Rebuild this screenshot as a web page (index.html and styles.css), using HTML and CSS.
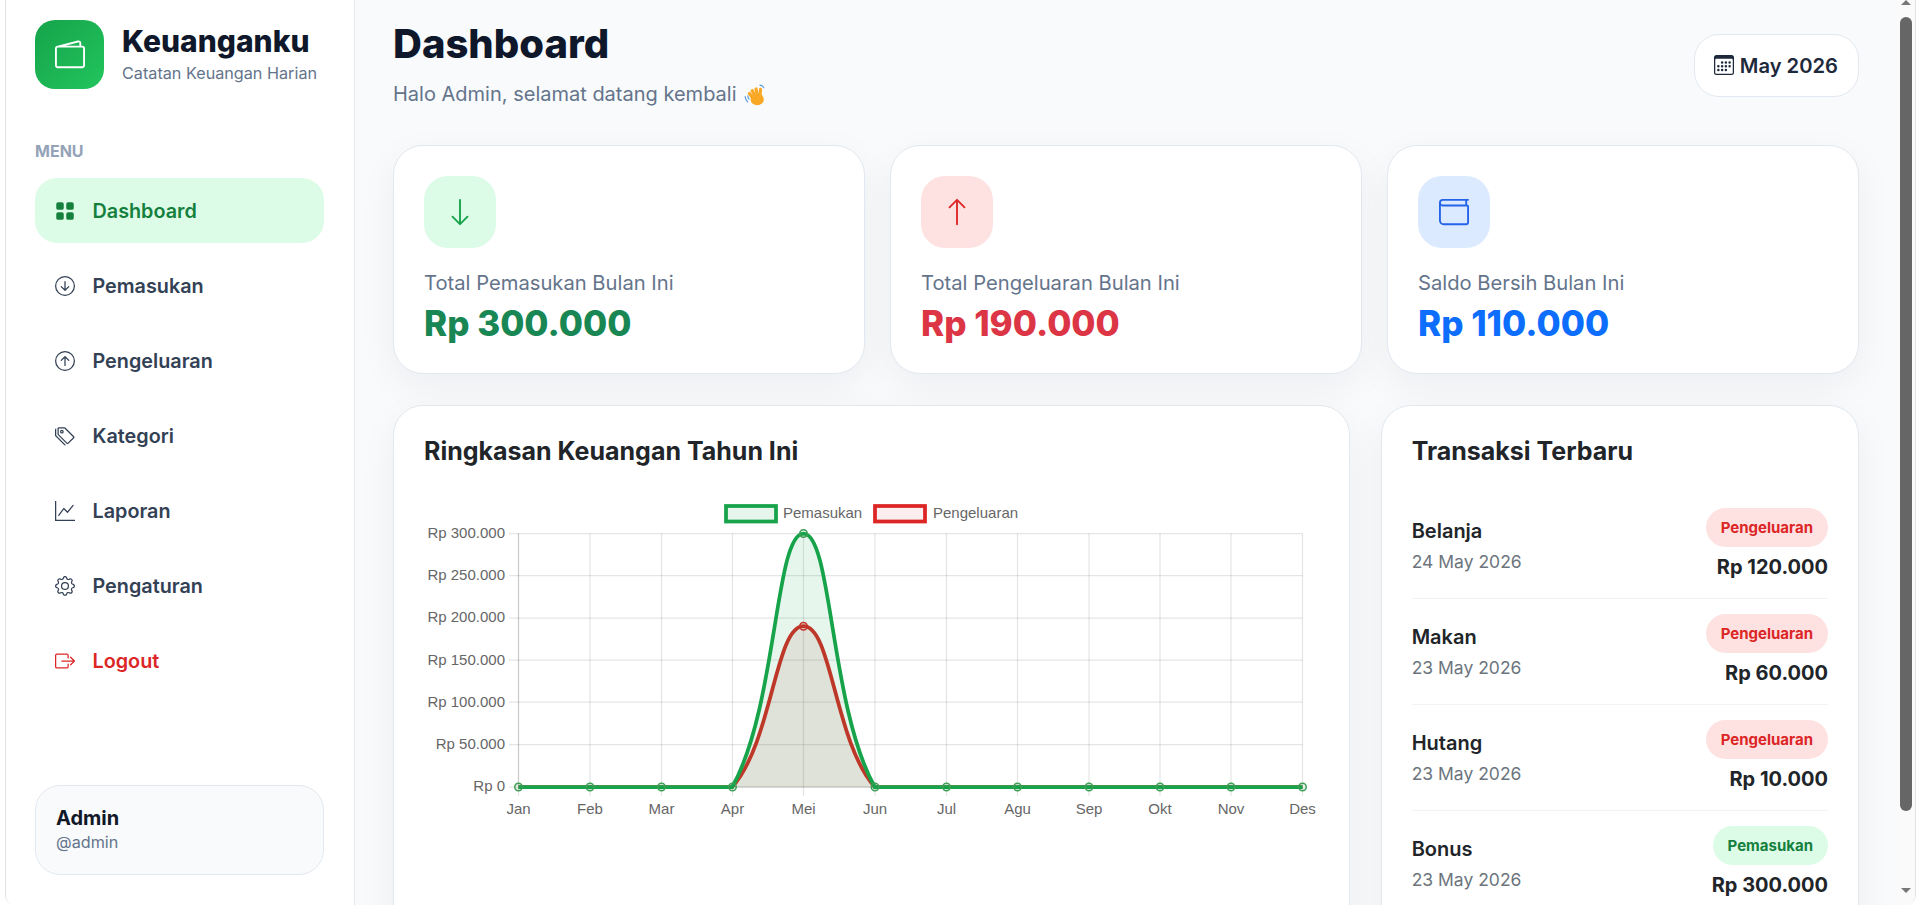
FILE: index.html
```html
<!doctype html>
<html lang="id">

<head>
	<meta charset="UTF-8" />
	<meta name="viewport" content="width=device-width, initial-scale=1.0" />
	<title>Keuanganku - Dashboard</title>
	<link rel="stylesheet" href="styles.css">
</head>

<body>
	<div class="window">
		<aside class="sidebar">
			<div class="brand">
				<div class="brand-logo">
					<svg viewBox="0 0 16 16" width="30" height="30" fill="currentColor"><path d="M12.136.326A1.5 1.5 0 0 1 14 1.78V3h.5A1.5 1.5 0 0 1 16 4.5v9a1.5 1.5 0 0 1-1.5 1.5h-13A1.5 1.5 0 0 1 0 13.5v-9a1.5 1.5 0 0 1 1.432-1.499zM5.562 3H13V1.78a.5.5 0 0 0-.621-.484zM1.5 4a.5.5 0 0 0-.5.5v9a.5.5 0 0 0 .5.5h13a.5.5 0 0 0 .5-.5v-9a.5.5 0 0 0-.5-.5z"/></svg>
				</div>
				<div class="brand-text">
					<div class="brand-name">Keuanganku</div>
					<div class="brand-sub">Catatan Keuangan Harian</div>
				</div>
			</div>

			<div class="menu-label">MENU</div>
			<nav class="menu">
				<a class="menu-item active">
					<svg viewBox="0 0 16 16" width="20" height="20" fill="currentColor"><path d="M1 2.5A1.5 1.5 0 0 1 2.5 1h3A1.5 1.5 0 0 1 7 2.5v3A1.5 1.5 0 0 1 5.5 7h-3A1.5 1.5 0 0 1 1 5.5zm8 0A1.5 1.5 0 0 1 10.5 1h3A1.5 1.5 0 0 1 15 2.5v3A1.5 1.5 0 0 1 13.5 7h-3A1.5 1.5 0 0 1 9 5.5zm-8 8A1.5 1.5 0 0 1 2.5 9h3A1.5 1.5 0 0 1 7 10.5v3A1.5 1.5 0 0 1 5.5 15h-3A1.5 1.5 0 0 1 1 13.5zm8 0A1.5 1.5 0 0 1 10.5 9h3a1.5 1.5 0 0 1 1.5 1.5v3a1.5 1.5 0 0 1-1.5 1.5h-3A1.5 1.5 0 0 1 9 13.5z"/></svg>
					Dashboard
				</a>
				<a class="menu-item">
					<svg viewBox="0 0 16 16" width="20" height="20" fill="currentColor"><path fill-rule="evenodd" d="M1 8a7 7 0 1 0 14 0A7 7 0 0 0 1 8m15 0A8 8 0 1 1 0 8a8 8 0 0 1 16 0M8.5 4.5a.5.5 0 0 0-1 0v5.793L5.354 8.146a.5.5 0 1 0-.708.708l3 3a.5.5 0 0 0 .708 0l3-3a.5.5 0 0 0-.708-.708L8.5 10.293z"/></svg>
					Pemasukan
				</a>
				<a class="menu-item">
					<svg viewBox="0 0 16 16" width="20" height="20" fill="currentColor"><path fill-rule="evenodd" d="M1 8a7 7 0 1 0 14 0A7 7 0 0 0 1 8m15 0A8 8 0 1 1 0 8a8 8 0 0 1 16 0m-7.5 3.5a.5.5 0 0 1-1 0V5.707L5.354 7.854a.5.5 0 1 1-.708-.708l3-3a.5.5 0 0 1 .708 0l3 3a.5.5 0 0 1-.708.708L8.5 5.707z"/></svg>
					Pengeluaran
				</a>
				<a class="menu-item">
					<svg viewBox="0 0 16 16" width="20" height="20" fill="currentColor"><path d="M3 2v4.586l7 7L14.586 9l-7-7zM2 2a1 1 0 0 1 1-1h4.586a1 1 0 0 1 .707.293l7 7a1 1 0 0 1 0 1.414l-4.586 4.586a1 1 0 0 1-1.414 0l-7-7A1 1 0 0 1 2 6.586z"/><path d="M5.5 5a.5.5 0 1 1 0-1 .5.5 0 0 1 0 1m0 1a1.5 1.5 0 1 0 0-3 1.5 1.5 0 0 0 0 3M1 7.086a1 1 0 0 0 .293.707L8.75 15.25l-.043.043a1 1 0 0 1-1.414 0l-7-7A1 1 0 0 1 0 7.586V3a1 1 0 0 1 1-1z"/></svg>
					Kategori
				</a>
				<a class="menu-item">
					<svg viewBox="0 0 16 16" width="20" height="20" fill="currentColor"><path fill-rule="evenodd" d="M0 0h1v15h15v1H0zm14.817 3.113a.5.5 0 0 1 .07.704l-4.5 5.5a.5.5 0 0 1-.74.037L7.06 6.767l-3.656 5.027a.5.5 0 0 1-.808-.588l4-5.5a.5.5 0 0 1 .758-.06l2.609 2.61 4.15-5.073a.5.5 0 0 1 .704-.07"/></svg>
					Laporan
				</a>
				<a class="menu-item">
					<svg viewBox="0 0 16 16" width="20" height="20" fill="currentColor"><path d="M8 4.754a3.246 3.246 0 1 0 0 6.492 3.246 3.246 0 0 0 0-6.492M5.754 8a2.246 2.246 0 1 1 4.492 0 2.246 2.246 0 0 1-4.492 0"/><path d="M9.796 1.343c-.527-1.79-3.065-1.79-3.592 0l-.094.319a.873.873 0 0 1-1.255.52l-.292-.16c-1.64-.892-3.433.902-2.54 2.541l.159.292a.873.873 0 0 1-.52 1.255l-.319.094c-1.79.527-1.79 3.065 0 3.592l.319.094a.873.873 0 0 1 .52 1.255l-.16.292c-.892 1.64.901 3.434 2.541 2.54l.292-.159a.873.873 0 0 1 1.255.52l.094.319c.527 1.79 3.065 1.79 3.592 0l.094-.319a.873.873 0 0 1 1.255-.52l.292.16c1.64.893 3.434-.902 2.54-2.541l-.159-.292a.873.873 0 0 1 .52-1.255l.319-.094c1.79-.527 1.79-3.065 0-3.592l-.319-.094a.873.873 0 0 1-.52-1.255l.16-.292c.893-1.64-.902-3.433-2.541-2.54l-.292.159a.873.873 0 0 1-1.255-.52zm-2.633.283c.246-.835 1.428-.835 1.674 0l.094.319a1.873 1.873 0 0 0 2.693 1.115l.291-.16c.764-.415 1.6.42 1.184 1.185l-.159.292a1.873 1.873 0 0 0 1.116 2.692l.318.094c.835.246.835 1.428 0 1.674l-.319.094a1.873 1.873 0 0 0-1.115 2.693l.16.291c.415.764-.42 1.6-1.185 1.184l-.291-.159a1.873 1.873 0 0 0-2.693 1.116l-.094.318c-.246.835-1.428.835-1.674 0l-.094-.319a1.873 1.873 0 0 0-2.692-1.115l-.292.16c-.764.415-1.6-.42-1.184-1.185l.159-.291A1.873 1.873 0 0 0 1.945 8.93l-.319-.094c-.835-.246-.835-1.428 0-1.674l.319-.094A1.873 1.873 0 0 0 3.06 4.377l-.16-.292c-.415-.764.42-1.6 1.185-1.184l.292.159a1.873 1.873 0 0 0 2.692-1.115z"/></svg>
					Pengaturan
				</a>
				<a class="menu-item logout">
					<svg viewBox="0 0 16 16" width="20" height="20" fill="currentColor"><path fill-rule="evenodd" d="M10 12.5a.5.5 0 0 1-.5.5h-8a.5.5 0 0 1-.5-.5v-9a.5.5 0 0 1 .5-.5h8a.5.5 0 0 1 .5.5v2a.5.5 0 0 0 1 0v-2A1.5 1.5 0 0 0 9.5 2h-8A1.5 1.5 0 0 0 0 3.5v9A1.5 1.5 0 0 0 1.5 14h8a1.5 1.5 0 0 0 1.5-1.5v-2a.5.5 0 0 0-1 0z"/><path fill-rule="evenodd" d="M15.854 8.354a.5.5 0 0 0 0-.708l-3-3a.5.5 0 0 0-.708.708L14.293 7.5H5.5a.5.5 0 0 0 0 1h8.793l-2.147 2.146a.5.5 0 0 0 .708.708z"/></svg>
					Logout
				</a>
			</nav>

			<div class="user-card">
				<div class="user-name">Admin</div>
				<div class="user-handle">@admin</div>
			</div>
		</aside>

		<main class="main">
			<header class="page-header">
				<div>
					<h1>Dashboard</h1>
					<p class="welcome">Halo Admin, selamat datang kembali
						<svg class="wave" viewBox="0 0 20 20" width="22" height="22">
							<g fill="#f9a825">
								<rect x="5.2" y="6.6" width="3" height="9" rx="1.5" transform="rotate(-38 6.7 11)" />
								<rect x="7.4" y="4.2" width="3" height="10" rx="1.5" transform="rotate(-26 8.9 9)" />
								<rect x="10.2" y="3" width="3" height="10" rx="1.5" transform="rotate(-12 11.7 8)" />
								<rect x="13.4" y="3.4" width="2.8" height="9" rx="1.4" transform="rotate(4 14.8 8)" />
								<ellipse cx="12" cy="14" rx="6" ry="5.4" />
							</g>
							<path d="M1 11.5c.2 2 1 3.6 2.4 4.8M3.4 10.8c.1 1.1.5 2.1 1.2 2.9M14.5 1c1.4.2 2.8 1 3.6 2.4" fill="none" stroke="#5a9bd8" stroke-width="1" stroke-linecap="round" />
						</svg>
					</p>
				</div>
				<div class="date-pill">
					<svg viewBox="0 0 16 16" width="20" height="20" fill="currentColor"><path d="M14 0H2a2 2 0 0 0-2 2v12a2 2 0 0 0 2 2h12a2 2 0 0 0 2-2V2a2 2 0 0 0-2-2M1 3.857C1 3.384 1.448 3 2 3h12c.552 0 1 .384 1 .857v10.286c0 .473-.448.857-1 .857H2c-.552 0-1-.384-1-.857z"/><path d="M6.5 7a1 1 0 1 0 0-2 1 1 0 0 0 0 2m3 0a1 1 0 1 0 0-2 1 1 0 0 0 0 2m3 0a1 1 0 1 0 0-2 1 1 0 0 0 0 2m-9 3a1 1 0 1 0 0-2 1 1 0 0 0 0 2m3 0a1 1 0 1 0 0-2 1 1 0 0 0 0 2m3 0a1 1 0 1 0 0-2 1 1 0 0 0 0 2m3 0a1 1 0 1 0 0-2 1 1 0 0 0 0 2m-9 3a1 1 0 1 0 0-2 1 1 0 0 0 0 2m3 0a1 1 0 1 0 0-2 1 1 0 0 0 0 2m3 0a1 1 0 1 0 0-2 1 1 0 0 0 0 2"/></svg>
					May 2026
				</div>
			</header>

			<section class="stats">
				<div class="card stat-card">
					<div class="stat-icon green">
						<svg viewBox="0 0 16 16" width="30" height="30" fill="currentColor"><path fill-rule="evenodd" d="M8 1a.5.5 0 0 1 .5.5v11.793l3.146-3.147a.5.5 0 0 1 .708.708l-4 4a.5.5 0 0 1-.708 0l-4-4a.5.5 0 0 1 .708-.708L7.5 13.293V1.5A.5.5 0 0 1 8 1"/></svg>
					</div>
					<div class="stat-label">Total Pemasukan Bulan Ini</div>
					<div class="stat-value text-green">Rp 300.000</div>
				</div>
				<div class="card stat-card">
					<div class="stat-icon red">
						<svg viewBox="0 0 16 16" width="30" height="30" fill="currentColor"><path fill-rule="evenodd" d="M8 15a.5.5 0 0 0 .5-.5V2.707l3.146 3.147a.5.5 0 0 0 .708-.708l-4-4a.5.5 0 0 0-.708 0l-4 4a.5.5 0 1 0 .708.708L7.5 2.707V14.5a.5.5 0 0 0 .5.5"/></svg>
					</div>
					<div class="stat-label">Total Pengeluaran Bulan Ini</div>
					<div class="stat-value text-red">Rp 190.000</div>
				</div>
				<div class="card stat-card">
					<div class="stat-icon blue">
						<svg viewBox="0 0 16 16" width="30" height="30" fill="currentColor"><path d="M0 3a2 2 0 0 1 2-2h13.5a.5.5 0 0 1 0 1H15v2a1 1 0 0 1 1 1v8.5a1.5 1.5 0 0 1-1.5 1.5h-12A2.5 2.5 0 0 1 0 12.5zm1 1.732V12.5A1.5 1.5 0 0 0 2.5 14h12a.5.5 0 0 0 .5-.5V5H2a1.99 1.99 0 0 1-1-.268M1 3a1 1 0 0 0 1 1h12V2H2a1 1 0 0 0-1 1"/></svg>
					</div>
					<div class="stat-label">Saldo Bersih Bulan Ini</div>
					<div class="stat-value text-blue">Rp 110.000</div>
				</div>
			</section>

			<section class="panels">
				<div class="card panel">
					<h2>Ringkasan Keuangan Tahun Ini</h2>
					<svg class="chart" viewBox="424 495 894 420" width="894" height="420">
						<!-- legend -->
						<rect class="legend-green" x="726" y="506" width="50" height="15.5" />
						<text class="chart-text" x="783" y="518">Pemasukan</text>
						<rect class="legend-red" x="875" y="506" width="50" height="15.5" />
						<text class="chart-text" x="933" y="518">Pengeluaran</text>

						<!-- grid -->
						<g class="grid-line">
							<path d="M509 533.5H1302.5M509 575.5H1302.5M509 618H1302.5M509 660H1302.5M509 702H1302.5M509 744.5H1302.5M509 787H1302.5" />
							<path d="M518.5 533.5V796M590 533.5V796M661.5 533.5V796M732.5 533.5V796M803.5 533.5V796M875 533.5V796M946.5 533.5V796M1017.5 533.5V796M1089 533.5V796M1160 533.5V796M1231 533.5V796M1302.5 533.5V796" />
						</g>
						<path class="axis-line" d="M518.5 533.5V787H1302.5" />

						<!-- y axis -->
						<g class="chart-text y-labels">
							<text x="505" y="538">Rp 300.000</text>
							<text x="505" y="580">Rp 250.000</text>
							<text x="505" y="622">Rp 200.000</text>
							<text x="505" y="665">Rp 150.000</text>
							<text x="505" y="707">Rp 100.000</text>
							<text x="505" y="749">Rp 50.000</text>
							<text x="505" y="791">Rp 0</text>
						</g>

						<!-- x axis -->
						<g class="chart-text x-labels">
							<text x="518.5" y="814">Jan</text>
							<text x="590" y="814">Feb</text>
							<text x="661.5" y="814">Mar</text>
							<text x="732.5" y="814">Apr</text>
							<text x="803.5" y="814">Mei</text>
							<text x="875" y="814">Jun</text>
							<text x="946.5" y="814">Jul</text>
							<text x="1017.5" y="814">Agu</text>
							<text x="1089" y="814">Sep</text>
							<text x="1160" y="814">Okt</text>
							<text x="1231" y="814">Nov</text>
							<text x="1302.5" y="814">Des</text>
						</g>

						<!-- pengeluaran -->
						<path class="area-red" d="M732.25 787C772.8 741.03 775 626.2 803.5 626.2C832 626.2 834.2 741.03 874.75 787Z" />
						<path class="line-red" d="M518.5 787H732.25C772.8 741.03 775 626.2 803.5 626.2C832 626.2 834.2 741.03 874.75 787H1302.5" />
						<circle class="point-red" cx="803.5" cy="626.2" r="3.75" />

						<!-- pemasukan -->
						<path class="area-green" d="M732.25 787C777.11 706.93 775 533.5 803.5 533.5C832 533.5 829.89 706.93 874.75 787Z" />
						<path class="line-green" d="M518.5 787H732.25C777.11 706.93 775 533.5 803.5 533.5C832 533.5 829.89 706.93 874.75 787H1302.5" />
						<g class="point-green">
							<circle cx="518.5" cy="787" r="3.75" />
							<circle cx="590" cy="787" r="3.75" />
							<circle cx="661.5" cy="787" r="3.75" />
							<circle cx="732.5" cy="787" r="3.75" />
							<circle cx="803.5" cy="533.5" r="3.75" />
							<circle cx="875" cy="787" r="3.75" />
							<circle cx="946.5" cy="787" r="3.75" />
							<circle cx="1017.5" cy="787" r="3.75" />
							<circle cx="1089" cy="787" r="3.75" />
							<circle cx="1160" cy="787" r="3.75" />
							<circle cx="1231" cy="787" r="3.75" />
							<circle cx="1302.5" cy="787" r="3.75" />
						</g>
					</svg>
				</div>

				<div class="card panel">
					<h2>Transaksi Terbaru</h2>
					<div class="trx-list">
						<div class="trx">
							<div>
								<div class="trx-name">Belanja</div>
								<div class="trx-date">24 May 2026</div>
							</div>
							<div class="trx-right">
								<span class="chip chip-red">Pengeluaran</span>
								<div class="trx-amount">Rp 120.000</div>
							</div>
						</div>
						<div class="trx">
							<div>
								<div class="trx-name">Makan</div>
								<div class="trx-date">23 May 2026</div>
							</div>
							<div class="trx-right">
								<span class="chip chip-red">Pengeluaran</span>
								<div class="trx-amount">Rp 60.000</div>
							</div>
						</div>
						<div class="trx">
							<div>
								<div class="trx-name">Hutang</div>
								<div class="trx-date">23 May 2026</div>
							</div>
							<div class="trx-right">
								<span class="chip chip-red">Pengeluaran</span>
								<div class="trx-amount">Rp 10.000</div>
							</div>
						</div>
						<div class="trx">
							<div>
								<div class="trx-name">Bonus</div>
								<div class="trx-date">23 May 2026</div>
							</div>
							<div class="trx-right">
								<span class="chip chip-green">Pemasukan</span>
								<div class="trx-amount">Rp 300.000</div>
							</div>
						</div>
					</div>
				</div>
			</section>
		</main>

		<div class="scrollbar">
			<div class="scroll-arrow up"></div>
			<div class="scroll-thumb"></div>
			<div class="scroll-arrow down"></div>
		</div>
	</div>
</body>

</html>
```

FILE: styles.css
```css
* {
	margin: 0;
	padding: 0;
	box-sizing: border-box;
}

body {
	font-family: Inter, "Liberation Sans", sans-serif;
	background-color: white;
	height: 100vh;
	overflow: hidden;
	color: #212529;
}

.window {
	display: flex;
	width: 1911px;
	height: 905px;
	margin-left: 5px;
	overflow: hidden;
	border-left: 1px solid #e2e2e2;
	border-right: 1px solid #e2e2e2;
	border-radius: 0 0 10px 10px;
}

/* sidebar */
.sidebar {
	width: 349px;
	flex-shrink: 0;
	display: flex;
	flex-direction: column;
	padding: 20px 30px 30px 29px;
	background-color: white;
	border-right: 1px solid #e5e7eb;
}

.brand {
	display: flex;
	align-items: center;
	gap: 18px;
}

.brand-logo {
	width: 69px;
	height: 69px;
	border-radius: 20px;
	display: flex;
	justify-content: center;
	align-items: center;
	color: white;
	background: linear-gradient(135deg, #16a34a, #22c55e);
}

.brand-text {
	padding-bottom: 2px;
}

.brand-name {
	margin-bottom: 5px;
	font-size: 30px;
	font-weight: 800;
	line-height: 34px;
	color: #0f172a;
}

.brand-sub {
	font-size: 16.2px;
	line-height: 20px;
	color: #64748b;
}

.menu-label {
	margin-top: 53px;
	font-size: 16px;
	font-weight: 700;
	line-height: 18px;
	color: #94a3b8;
}

.menu {
	display: flex;
	flex-direction: column;
	gap: 10px;
	margin-top: 18px;
}

.menu-item {
	display: flex;
	align-items: center;
	gap: 17.5px;
	height: 65px;
	padding: 0 20px;
	border-radius: 22px;
	font-size: 19.8px;
	font-weight: 600;
	color: #334155;
}

.menu-item.active {
	background-color: #dcfce7;
	color: #15803d;
}

.menu-item.logout {
	color: #dc2626;
}

.user-card {
	margin-top: auto;
	height: 90px;
	padding: 19px 20px;
	border: 1px solid #e2e8f0;
	border-radius: 25px;
	background-color: #f8fafc;
}

.user-name {
	font-size: 20px;
	font-weight: 700;
	line-height: 26px;
	color: #111827;
}

.user-handle {
	font-size: 16.2px;
	line-height: 22px;
	color: #64748b;
}

/* main */
.main {
	flex: 1;
	min-width: 0;
	padding: 20px 37px 0 38px;
	overflow: hidden;
	background-color: #f8fafc;
}

.page-header {
	display: flex;
	justify-content: space-between;
	align-items: center;
	margin-bottom: 35px;
}

h1 {
	font-size: 40px;
	font-weight: 800;
	line-height: 48px;
	color: #0f172a;
}

.welcome {
	display: flex;
	align-items: center;
	gap: 7px;
	margin-top: 11px;
	font-size: 20px;
	line-height: 31px;
	color: #64748b;
}

.date-pill {
	display: flex;
	align-items: center;
	gap: 5.5px;
	height: 63px;
	padding: 0 20px 0 19.5px;
	border: 1px solid #e2e8f0;
	border-radius: 25px;
	background-color: white;
	font-size: 20.2px;
	font-weight: 600;
	color: #1e293b;
}

.card {
	background-color: white;
	border: 1px solid #e2e8f0;
	border-radius: 30px;
	box-shadow: 0 12px 38px rgba(15, 23, 42, 0.05);
}

.stats {
	display: grid;
	grid-template-columns: repeat(3, 1fr);
	gap: 25px;
}

.stat-card {
	height: 229px;
	padding: 30px;
}

.stat-icon {
	width: 72px;
	height: 72px;
	border-radius: 24px;
	display: flex;
	justify-content: center;
	align-items: center;
}

.stat-icon.green {
	background-color: #dcfce7;
	color: #16a34a;
}

.stat-icon.red {
	background-color: #fee2e2;
	color: #dc2626;
}

.stat-icon.blue {
	background-color: #dbeafe;
	color: #2563eb;
}

.stat-label {
	margin-top: 22px;
	font-size: 20.2px;
	line-height: 26px;
	color: #64748b;
}

.stat-value {
	margin-top: 5px;
	font-size: 35px;
	font-weight: 800;
	line-height: 45px;
}

.text-green {
	color: #198754;
}

.text-red {
	color: #dc3545;
}

.text-blue {
	color: #0d6efd;
}

.panels {
	display: grid;
	grid-template-columns: 2fr 1fr;
	gap: 31px;
	margin-top: 31px;
}

.panel {
	padding: 30px;
	height: 640px;
}

h2 {
	font-size: 25px;
	font-weight: 700;
	line-height: 30px;
}

/* chart */
.chart {
	display: block;
	margin-top: 29px;
}

.chart-text {
	font-family: "Liberation Sans", Arial, sans-serif;
	font-size: 15px;
	fill: #666;
}

.y-labels {
	text-anchor: end;
}

.x-labels {
	text-anchor: middle;
}

.grid-line {
	fill: none;
	stroke: rgba(0, 0, 0, 0.1);
	stroke-width: 1.25;
}

.axis-line {
	fill: none;
	stroke: rgba(0, 0, 0, 0.12);
	stroke-width: 1.25;
}

.legend-green,
.area-green {
	fill: rgba(22, 163, 74, 0.1);
}

.legend-green {
	stroke: #16a34a;
	stroke-width: 3.75;
}

.legend-red {
	fill: rgba(220, 38, 38, 0.08);
	stroke: #dc2626;
	stroke-width: 3.75;
}

.area-red {
	fill: rgba(165, 35, 25, 0.1);
}

.line-green,
.line-red {
	fill: none;
	stroke-width: 3.75;
}

.line-green {
	stroke: #16a34a;
}

.line-red {
	stroke: #d22c26;
}

.point-green circle {
	fill: rgba(22, 163, 74, 0.1);
	stroke: #3f9d55;
	stroke-width: 1.5;
}

.point-red {
	fill: rgba(220, 38, 38, 0.08);
	stroke: #dc2626;
	stroke-width: 1.5;
}

/* transaksi */
.trx-list {
	margin-top: 27px;
}

.trx {
	display: flex;
	justify-content: space-between;
	align-items: center;
	height: 106px;
	border-bottom: 1px solid #f1f3f5;
}

.trx-name {
	font-size: 20px;
	font-weight: 600;
	line-height: 28px;
}

.trx-date {
	margin-top: 4px;
	font-size: 17.5px;
	line-height: 26px;
	color: #6c757d;
}

.trx-right {
	display: flex;
	flex-direction: column;
	align-items: flex-end;
	gap: 5.5px;
	padding-bottom: 2.5px;
}

.chip {
	height: 39px;
	padding: 0 15px;
	border-radius: 20px;
	font-size: 15px;
	font-weight: 700;
	line-height: 39px;
}

.chip-red {
	background-color: #fee2e2;
	color: #dc2626;
}

.chip-green {
	background-color: #dcfce7;
	color: #15803d;
}

.trx-amount {
	font-size: 20px;
	font-weight: 700;
	line-height: 28px;
}

/* scrollbar */
.scrollbar {
	width: 19px;
	flex-shrink: 0;
	display: flex;
	flex-direction: column;
	align-items: center;
	background-color: #fafafa;
}

.scroll-thumb {
	width: 12px;
	height: 794px;
	margin-top: 12px;
	border-radius: 6px;
	background-color: #666;
}

.scroll-arrow {
	width: 0;
	height: 0;
	border-left: 5px solid transparent;
	border-right: 5px solid transparent;
}

.scroll-arrow.up {
	border-bottom: 5px solid #777;
}

.scroll-arrow.down {
	margin-top: 77px;
	border-top: 5px solid #777;
}
```
